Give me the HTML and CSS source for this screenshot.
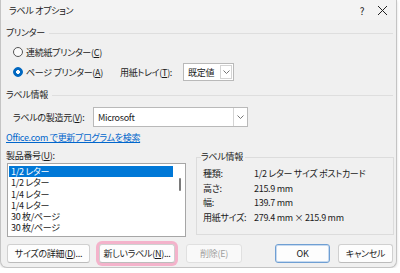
FILE: index.html
```html
<!DOCTYPE html>
<html lang="ja">
<head>
    <meta charset="UTF-8">
    <meta name="viewport" content="width=device-width, initial-scale=1.0">
    <title>ラベル オプション</title>
    <link rel="stylesheet" href="styles.css">
</head>
<body>
    <div class="window">
        <!-- Title bar -->
        <div class="titlebar">
            <span class="title">ラベル オプション</span>
            <span class="tb-btn">?</span>
            <span class="tb-btn">
                <svg width="11" height="11" viewBox="0 0 11 11"><path d="M1 1 L10 10 M10 1 L1 10" stroke="#222" stroke-width="1" fill="none"/></svg>
            </span>
        </div>

        <div class="content">
            <!-- Printer -->
            <div class="group-head">プリンター</div>
            <div class="row radio-row">
                <span class="radio"></span>
                <span class="radio-text">連続紙プリンター(<u>C</u>)</span>
            </div>
            <div class="row radio-row">
                <span class="radio checked"></span>
                <span class="radio-text">ページ プリンター(<u>A</u>)</span>
                <span class="tray-label">用紙トレイ(<u>T</u>):</span>
                <div class="select tray">
                    <span class="select-value">既定値</span>
                    <span class="select-arrow">
                        <svg width="7" height="4" viewBox="0 0 7 4"><path d="M0.5 0.5 L3.5 3.5 L6.5 0.5" stroke="#666" stroke-width="0.9" fill="none"/></svg>
                    </span>
                </div>
            </div>

            <!-- Label info -->
            <div class="group-head second">ラベル情報</div>
            <div class="row vendor-row">
                <span class="vendor-label">ラベルの製造元(<u>V</u>):</span>
                <div class="select vendor">
                    <span class="select-value">Microsoft</span>
                    <span class="select-arrow">
                        <svg width="7" height="4" viewBox="0 0 7 4"><path d="M0.5 0.5 L3.5 3.5 L6.5 0.5" stroke="#666" stroke-width="0.9" fill="none"/></svg>
                    </span>
                </div>
            </div>
            <a class="update-link" href="#">Office.com で更新プログラムを検索</a>

            <div class="main-grid">
                <div class="products">
                    <div class="products-label">製品番号(<u>U</u>):</div>
                    <div class="listbox">
                        <div class="list-item selected">1/2 レター</div>
                        <div class="list-item">1/2 レター</div>
                        <div class="list-item">1/4 レター</div>
                        <div class="list-item">1/4 レター</div>
                        <div class="list-item">30 枚/ページ</div>
                        <div class="list-item">30 枚/ページ</div>
                        <span class="scroll-thumb"></span>
                    </div>
                </div>

                <fieldset class="info-box">
                    <legend>ラベル情報</legend>
                    <div class="info-row"><span class="info-key">種類:</span><span>1/2 レター サイズ ポストカード</span></div>
                    <div class="info-row"><span class="info-key">高さ:</span><span>215.9 mm</span></div>
                    <div class="info-row"><span class="info-key">幅:</span><span>139.7 mm</span></div>
                    <div class="info-row"><span class="info-key">用紙サイズ:</span><span>279.4 mm × 215.9 mm</span></div>
                </fieldset>
            </div>

            <!-- Buttons -->
            <div class="button-row">
                <button class="btn btn-details">サイズの詳細(<u>D</u>)...</button>
                <button class="btn btn-new">新しいラベル(<u>N</u>)...</button>
                <button class="btn btn-delete" disabled>削除(E)</button>
                <span class="spacer"></span>
                <button class="btn btn-ok">OK</button>
                <button class="btn btn-cancel">キャンセル</button>
            </div>
        </div>
    </div>
</body>
</html>
```

FILE: styles.css
```css
/* Page */
body {
    margin: 0;
    background: #ffffff;
    font-family: "Noto Sans CJK JP", "Noto Sans", sans-serif;
    font-feature-settings: "palt";
    font-size: 9px;
    letter-spacing: -0.3px;
    color: #1a1a1a;
}

u {
    text-decoration: underline;
    text-underline-offset: 1px;
}

/* Dialog window */
.window {
    width: 395px;
    height: 267px;
    background: #f0f0f0;
    border: 1px solid #c4c4c4;
    border-top: none;
    border-radius: 0 0 7px 7px;
    box-shadow: 0 1px 3px rgba(0, 0, 0, 0.15);
    box-sizing: content-box;
}

.titlebar {
    height: 20px;
    display: flex;
    align-items: center;
    background: #f3f3f3;
}

.title {
    flex: 1;
    padding-left: 8px;
}

.tb-btn {
    width: 20px;
    height: 20px;
    display: flex;
    align-items: center;
    justify-content: center;
    font-size: 10px;
}

.tb-btn:first-of-type {
    margin-right: 14px;
}

.tb-btn:last-child {
    margin-right: 4px;
}

.content {
    padding: 0 3px 0 5px;
}

/* Group headers */
.group-head {
    height: 12px;
    line-height: 12px;
    margin-top: 7px;
    display: flex;
    align-items: center;
    gap: 4px;
}

.group-head::after {
    content: "";
    flex: 1;
    border-top: 1px solid #dedede;
    margin-top: 1px;
}

.row {
    display: flex;
    align-items: center;
    height: 20px;
}

/* Radio buttons */
.radio-row {
    padding-left: 7px;
}

.group-head + .radio-row {
    margin-top: 3px;
}

.radio {
    width: 8px;
    height: 8px;
    border: 1px solid #555;
    border-radius: 50%;
    background: #fbfbfb;
    margin-right: 3px;
    flex-shrink: 0;
}

.radio.checked {
    border-color: #0067c0;
    background: radial-gradient(circle, #fff 0 1.6px, #0067c0 2.2px);
}

.radio-text {
    width: 94px;
    white-space: nowrap;
}

.tray-label {
    width: 63px;
    white-space: nowrap;
}

/* Drop-down boxes */
.select {
    height: 18px;
    box-sizing: border-box;
    background: #fff;
    border: 1px solid #b9b9b9;
    display: flex;
    align-items: center;
}

.select-value {
    flex: 1;
    padding-left: 4px;
}

.select-arrow {
    width: 12px;
    height: 14px;
    margin-right: 1px;
    border: 1px solid #d4d4d4;
    box-sizing: border-box;
    display: flex;
    align-items: center;
    justify-content: center;
}

.tray {
    width: 51px;
}

.second {
    margin-top: 7px;
}

.vendor-row {
    margin-top: 6px;
    padding-left: 7px;
}

.vendor-label {
    width: 80px;
    white-space: nowrap;
}

.vendor {
    width: 155px;
    height: 20px;
}

.vendor .select-arrow {
    height: 18px;
    width: 14px;
    margin-right: 0;
    border-top: none;
    border-bottom: none;
    border-right: none;
}

.update-link {
    display: inline-block;
    margin-top: 5px;
    height: 12px;
    line-height: 12px;
    color: #0066cc;
    text-decoration: underline;
    text-underline-offset: 1px;
}

/* Products list and info box */
.main-grid {
    display: grid;
    grid-template-columns: 180px 198px;
    column-gap: 10px;
    margin-top: 6px;
}

.products-label {
    height: 12px;
    line-height: 12px;
}

.listbox {
    position: relative;
    margin: 1px 0 0 1px;
    height: 74px;
    box-sizing: border-box;
    background: #fff;
    border: 1px solid #a6a6a6;
    padding: 2px 12px 0 1px;
    overflow: hidden;
}

.list-item {
    height: 11.25px;
    line-height: 11.25px;
    padding-left: 2px;
}

.list-item.selected {
    background: #0078d7;
    color: #fff;
}

.scroll-thumb {
    position: absolute;
    right: 4px;
    top: 14px;
    width: 2px;
    height: 13px;
    background: #7a7a7a;
    border-radius: 1px;
}

.info-box {
    margin: 0 0 2px 0;
    padding: 3px 0 0 6px;
    border: 1px solid #dcdcdc;
    min-width: 0;
}

.info-box legend {
    padding: 0 2px 0 0;
    margin-left: -2px;
    line-height: 14px;
}

.info-row {
    display: flex;
    height: 14.5px;
    line-height: 14.5px;
    white-space: nowrap;
}

.info-key {
    width: 51px;
}

/* Buttons */
.button-row {
    display: flex;
    align-items: center;
    margin-top: 7px;
}

.btn {
    height: 19px;
    padding: 0;
    font-family: inherit;
    font-feature-settings: "palt";
    font-size: 9px;
    letter-spacing: -0.3px;
    white-space: nowrap;
    color: #1a1a1a;
    background: #fdfdfd;
    border: 1px solid #d0d0d0;
    border-bottom-color: #bcbcbc;
    border-radius: 3px;
}

.btn-details {
    width: 83px;
    margin-left: 1px;
}

.btn-new {
    width: 76px;
    margin-left: 9px;
    box-shadow: 0 0 0 3px #f4b3cb;
}

.btn-delete {
    width: 56px;
    margin-left: 11px;
    color: #a0a0a0;
    background: #f9f9f9;
    border-color: #e0e0e0;
}

.spacer {
    flex: 1;
}

.btn-ok {
    width: 55px;
    border: 1px solid #6f9fd3;
    box-shadow: inset 0 0 0 1px #c7daf0;
}

.btn-cancel {
    width: 55px;
    margin-left: 8px;
}
```
